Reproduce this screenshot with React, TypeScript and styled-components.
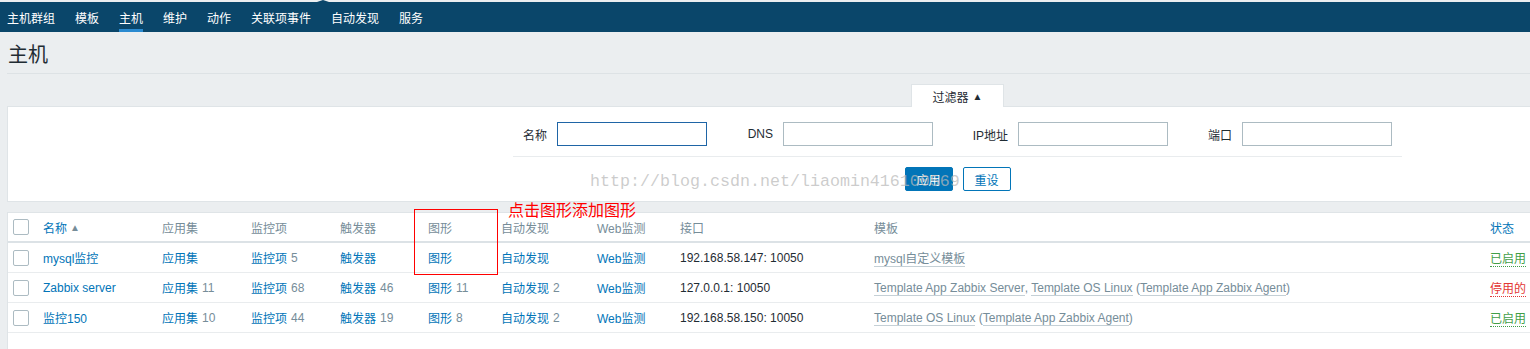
import styled, { createGlobalStyle } from 'styled-components';

const COLORS = {
    nav: '#0a466a',
    navActive: '#2a8ad0',
    bg: '#ebeef0',
    border: '#dfe4e7',
    link: '#0275b8',
    gray: '#768d99',
    text: '#1f2c33',
    green: '#429e47',
    red: '#e33734',
};

const FONT = `"Liberation Sans", Arial, "Noto Sans CJK SC", sans-serif`;

// 표 컬럼 폭 (체크박스 ~ 상태)
const COLS = '35px 119px 89px 89px 88px 73px 96px 83px 194px 616px 1fr';

const GlobalStyle = createGlobalStyle`
    html, body {
        margin: 0;
        padding: 0;
        background: ${COLORS.bg};
        font-family: ${FONT};
        font-size: 12px;
        color: ${COLORS.text};
        overflow: hidden;
    }
`;

const menu = ['主机群组', '模板', '主机', '维护', '动作', '关联项事件', '自动发现', '服务'];

type Tmpl = { name: string; parent?: string };

const hosts: {
    name: string;
    apps?: number;
    items?: number;
    triggers?: number;
    graphs?: number;
    discovery?: number;
    iface: string;
    templates: Tmpl[];
    enabled: boolean;
}[] = [
    {
        name: 'mysql监控',
        items: 5,
        iface: '192.168.58.147: 10050',
        templates: [{ name: 'mysql自定义模板' }],
        enabled: true,
    },
    {
        name: 'Zabbix server',
        apps: 11,
        items: 68,
        triggers: 46,
        graphs: 11,
        discovery: 2,
        iface: '127.0.0.1: 10050',
        templates: [
            { name: 'Template App Zabbix Server' },
            { name: 'Template OS Linux', parent: 'Template App Zabbix Agent' },
        ],
        enabled: false,
    },
    {
        name: '监控150',
        apps: 10,
        items: 44,
        triggers: 19,
        graphs: 8,
        discovery: 2,
        iface: '192.168.58.150: 10050',
        templates: [{ name: 'Template OS Linux', parent: 'Template App Zabbix Agent' }],
        enabled: true,
    },
];

export default function App() {
    const linkCell = (label: string, count?: number) => (
        <Cell>
            <Link>{label}</Link>
            {count !== undefined && <Count>{count}</Count>}
        </Cell>
    );

    return (
        <>
            <GlobalStyle />
            <Nav>
                {menu.map((m) => (
                    <NavItem key={m} $active={m === '主机'}>
                        {m}
                    </NavItem>
                ))}
            </Nav>

            <Main>
                <Header>
                    <Title>主机</Title>
                </Header>

                <TabRow>
                    <FilterTab>过滤器 <Arrow>▲</Arrow></FilterTab>
                </TabRow>

                <FilterPanel>
                    <FilterForm>
                        <Fields>
                            <Label>名称</Label>
                            <Input $focused />
                            <Label>DNS</Label>
                            <Input />
                            <Label>IP地址</Label>
                            <Input />
                            <Label>端口</Label>
                            <Input />
                        </Fields>
                        <Buttons>
                            <Button $primary>应用</Button>
                            <Button>重设</Button>
                        </Buttons>
                    </FilterForm>
                    <Watermark>http://blog.csdn.net/liaomin416100569</Watermark>
                </FilterPanel>

                <TablePanel>
                    <HeadRow>
                        <Cell><Checkbox /></Cell>
                        <HeadCell $sortable>名称 <SortArrow>▲</SortArrow></HeadCell>
                        <HeadCell>应用集</HeadCell>
                        <HeadCell>监控项</HeadCell>
                        <HeadCell>触发器</HeadCell>
                        <HeadCell>图形</HeadCell>
                        <HeadCell>自动发现</HeadCell>
                        <HeadCell>Web监测</HeadCell>
                        <HeadCell>接口</HeadCell>
                        <HeadCell>模板</HeadCell>
                        <HeadCell $sortable>状态</HeadCell>
                    </HeadRow>

                    {hosts.map((h) => (
                        <Row key={h.name}>
                            <Cell><Checkbox /></Cell>
                            <Cell><Link>{h.name}</Link></Cell>
                            {linkCell('应用集', h.apps)}
                            {linkCell('监控项', h.items)}
                            {linkCell('触发器', h.triggers)}
                            {linkCell('图形', h.graphs)}
                            {linkCell('自动发现', h.discovery)}
                            {linkCell('Web监测')}
                            <Cell>{h.iface}</Cell>
                            <Cell>
                                {h.templates.map((t, i) => (
                                    <span key={t.name}>
                                        {i > 0 && <Plain>, </Plain>}
                                        <TemplateLink>{t.name}</TemplateLink>
                                        {t.parent && (
                                            <>
                                                <Plain> (</Plain>
                                                <TemplateLink>{t.parent}</TemplateLink>
                                                <Plain>)</Plain>
                                            </>
                                        )}
                                    </span>
                                ))}
                            </Cell>
                            <Cell>
                                <Status $enabled={h.enabled}>{h.enabled ? '已启用' : '停用的'}</Status>
                            </Cell>
                        </Row>
                    ))}

                    <NoteBox />
                    <NoteText>点击图形添加图形</NoteText>
                </TablePanel>
            </Main>
        </>
    );
}

const Nav = styled.nav`
    position: relative;
    display: flex;
    gap: 20px;
    height: 30px;
    margin-top: 2px;
    padding-left: 7px;
    background: ${COLORS.nav};

    &::before {
        content: '';
        position: absolute;
        left: 317px;
        top: -2px;
        border-left: 6px solid transparent;
        border-right: 6px solid transparent;
        border-bottom: 2px solid ${COLORS.nav};
    }
`;

const NavItem = styled.div<{ $active?: boolean }>`
    display: flex;
    align-items: center;
    box-sizing: border-box;
    height: 30px;
    padding-top: 3px;
    border-bottom: 3px solid ${(p) => (p.$active ? COLORS.navActive : 'transparent')};
    color: #fff;
    font-size: 12px;
    white-space: nowrap;
`;

const Main = styled.div`
    width: 1540px;
    padding-left: 7px;
`;

const Header = styled.div`
    height: 41px;
    border-bottom: 1px solid #dde2e5;
`;

const Title = styled.h1`
    margin: 0;
    padding-top: 11px;
    padding-left: 1px;
    font-size: 20px;
    line-height: 24px;
    font-weight: normal;
    color: ${COLORS.text};
`;

const TabRow = styled.div`
    display: flex;
    margin-top: 10px;
    padding-left: 904px;
`;

const FilterTab = styled.div`
    position: relative;
    z-index: 1;
    width: 93px;
    height: 23px;
    margin-bottom: -1px;
    box-sizing: border-box;
    border: 1px solid ${COLORS.border};
    border-bottom: none;
    background: #fff;
    display: flex;
    align-items: center;
    justify-content: center;
    gap: 4px;
    color: ${COLORS.text};
`;

const Arrow = styled.span`
    font-size: 10px;
`;

const FilterPanel = styled.div`
    position: relative;
    background: #fff;
    border: 1px solid ${COLORS.border};
    padding: 15px 0 10px;
`;

const FilterForm = styled.div`
    width: 889px;
    margin-left: 505px;
`;

const Fields = styled.div`
    display: grid;
    grid-template-columns: 34px 150px 56px 150px 65px 150px 54px 150px;
    column-gap: 10px;
    align-items: center;
    padding: 0 10px 10px 0;
    border-bottom: 1px solid #e9ecee;
`;

const Label = styled.label`
    text-align: right;
    white-space: nowrap;
    color: ${COLORS.text};
`;

const Input = styled.div<{ $focused?: boolean }>`
    height: 24px;
    box-sizing: border-box;
    border: 1px solid ${(p) => (p.$focused ? '#1f65a6' : '#acbbc2')};
    background: #fff;
`;

const Buttons = styled.div`
    display: flex;
    justify-content: center;
    gap: 10px;
    margin-top: 10px;
`;

const Button = styled.button<{ $primary?: boolean }>`
    width: 48px;
    height: 24px;
    padding: 0;
    border: 1px solid ${COLORS.link};
    border-radius: 2px;
    background: ${(p) => (p.$primary ? COLORS.link : '#fff')};
    color: ${(p) => (p.$primary ? '#fff' : COLORS.link)};
    font-family: ${FONT};
    font-size: 12px;
`;

const Watermark = styled.div`
    position: absolute;
    left: 582px;
    top: 65px;
    font-family: "Liberation Mono", "Courier New", monospace;
    font-size: 16.67px;
    line-height: 20px;
    color: rgba(185, 185, 185, 0.72);
    pointer-events: none;
    white-space: nowrap;
`;

const TablePanel = styled.div`
    position: relative;
    margin-top: 10px;
    padding-bottom: 30px;
    background: #fff;
    border: 1px solid ${COLORS.border};
`;

const HeadRow = styled.div`
    display: grid;
    grid-template-columns: ${COLS};
    height: 28px;
    align-items: center;
    border-bottom: 2px solid #dce2e6;
`;

const Row = styled.div`
    display: grid;
    grid-template-columns: ${COLS};
    height: 29px;
    align-items: center;
    border-bottom: 1px solid #e9ecee;
`;

const Cell = styled.div`
    display: flex;
    align-items: center;
    white-space: nowrap;
    color: ${COLORS.text};

    &:first-child {
        padding-left: 5px;
    }
`;

const HeadCell = styled.div<{ $sortable?: boolean }>`
    display: flex;
    align-items: center;
    gap: 3px;
    white-space: nowrap;
    color: ${(p) => (p.$sortable ? COLORS.link : COLORS.gray)};
`;

const SortArrow = styled.span`
    font-size: 10px;
    color: ${COLORS.gray};
`;

const Checkbox = styled.span`
    display: inline-block;
    width: 16px;
    height: 16px;
    box-sizing: border-box;
    border: 1px solid #acbbc2;
    border-radius: 2px;
    background: #fff;
`;

const Link = styled.span`
    color: ${COLORS.link};
`;

const Count = styled.span`
    margin-left: 4px;
    color: ${COLORS.gray};
`;

const Plain = styled.span`
    color: ${COLORS.gray};
    white-space: pre;
`;

const TemplateLink = styled.span`
    color: ${COLORS.gray};
    border-bottom: 1px solid #c5d0d6;
`;

const Status = styled.span<{ $enabled: boolean }>`
    color: ${(p) => (p.$enabled ? COLORS.green : COLORS.red)};
    border-bottom: 1px dotted ${(p) => (p.$enabled ? COLORS.green : COLORS.red)};
`;

const NoteBox = styled.div`
    position: absolute;
    left: 406px;
    top: -4px;
    width: 84px;
    height: 66px;
    box-sizing: border-box;
    border: 1px solid #f00;
    pointer-events: none;
`;

const NoteText = styled.div`
    position: absolute;
    left: 500px;
    top: -12px;
    font-size: 16px;
    line-height: 20px;
    color: #f00;
    white-space: nowrap;
`;
